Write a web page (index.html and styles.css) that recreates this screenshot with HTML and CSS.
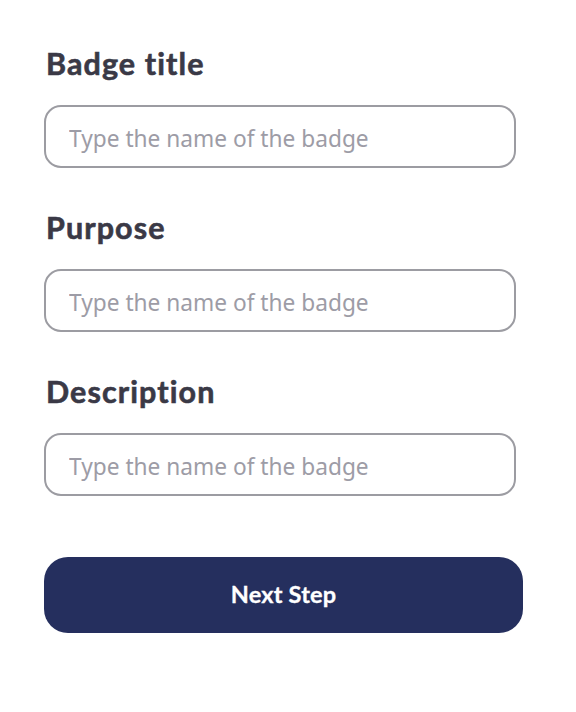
FILE: index.html
```html
<!DOCTYPE html>
<html lang="en">
<head>
<meta charset="utf-8">
<title>Badge form</title>
<link rel="stylesheet" href="styles.css">
</head>
<body>
<form class="form">
  <div class="field">
    <label class="label" for="title">Badge title</label>
    <input class="input" id="title" type="text" placeholder="Type the name of the badge">
  </div>
  <div class="field">
    <label class="label" for="purpose">Purpose</label>
    <input class="input" id="purpose" type="text" placeholder="Type the name of the badge">
  </div>
  <div class="field">
    <label class="label" for="desc">Description</label>
    <input class="input" id="desc" type="text" placeholder="Type the name of the badge">
  </div>
  <button class="next" type="button">Next Step</button>
</form>
</body>
</html>
```
FILE: styles.css
```css
html, body {
  margin: 0;
  padding: 0;
  background: #ffffff;
}
.form {
  display: flex;
  flex-direction: column;
  gap: 42px;
  padding: 46px 0 0 44px;
}
.field {
  display: flex;
  flex-direction: column;
  gap: 25px;
}
.label {
  font-family: Lato, "Liberation Sans", sans-serif;
  font-weight: 700;
  font-size: 30.5px;
  line-height: 34px;
  letter-spacing: 1.1px;
  -webkit-text-stroke: 0.6px #3a3946;
  color: #3a3946;
  padding-left: 2px;
  font-variant-ligatures: none;
}
.input {
  box-sizing: border-box;
  width: 472px;
  height: 63px;
  margin: 0;
  padding: 3px 0 0 23px;
  border: 2px solid #9c9ca2;
  border-radius: 17px;
  background: #ffffff;
  font-family: "Noto Sans", sans-serif;
  font-size: 22.7px;
  color: #3a3946;
  outline: none;
}
.input::placeholder {
  color: #9d9ca6;
  opacity: 1;
}
.next {
  box-sizing: border-box;
  width: 479px;
  height: 76px;
  margin-top: 19px;
  border: none;
  border-radius: 24px;
  background: #252f5e;
  color: #ffffff;
  font-family: Lato, "Liberation Sans", sans-serif;
  font-weight: 700;
  font-size: 23.5px;
  letter-spacing: 0.2px;
  -webkit-text-stroke: 0.3px #ffffff;
  padding: 0 0 2px;
  cursor: pointer;
  font-variant-ligatures: none;
}
```
